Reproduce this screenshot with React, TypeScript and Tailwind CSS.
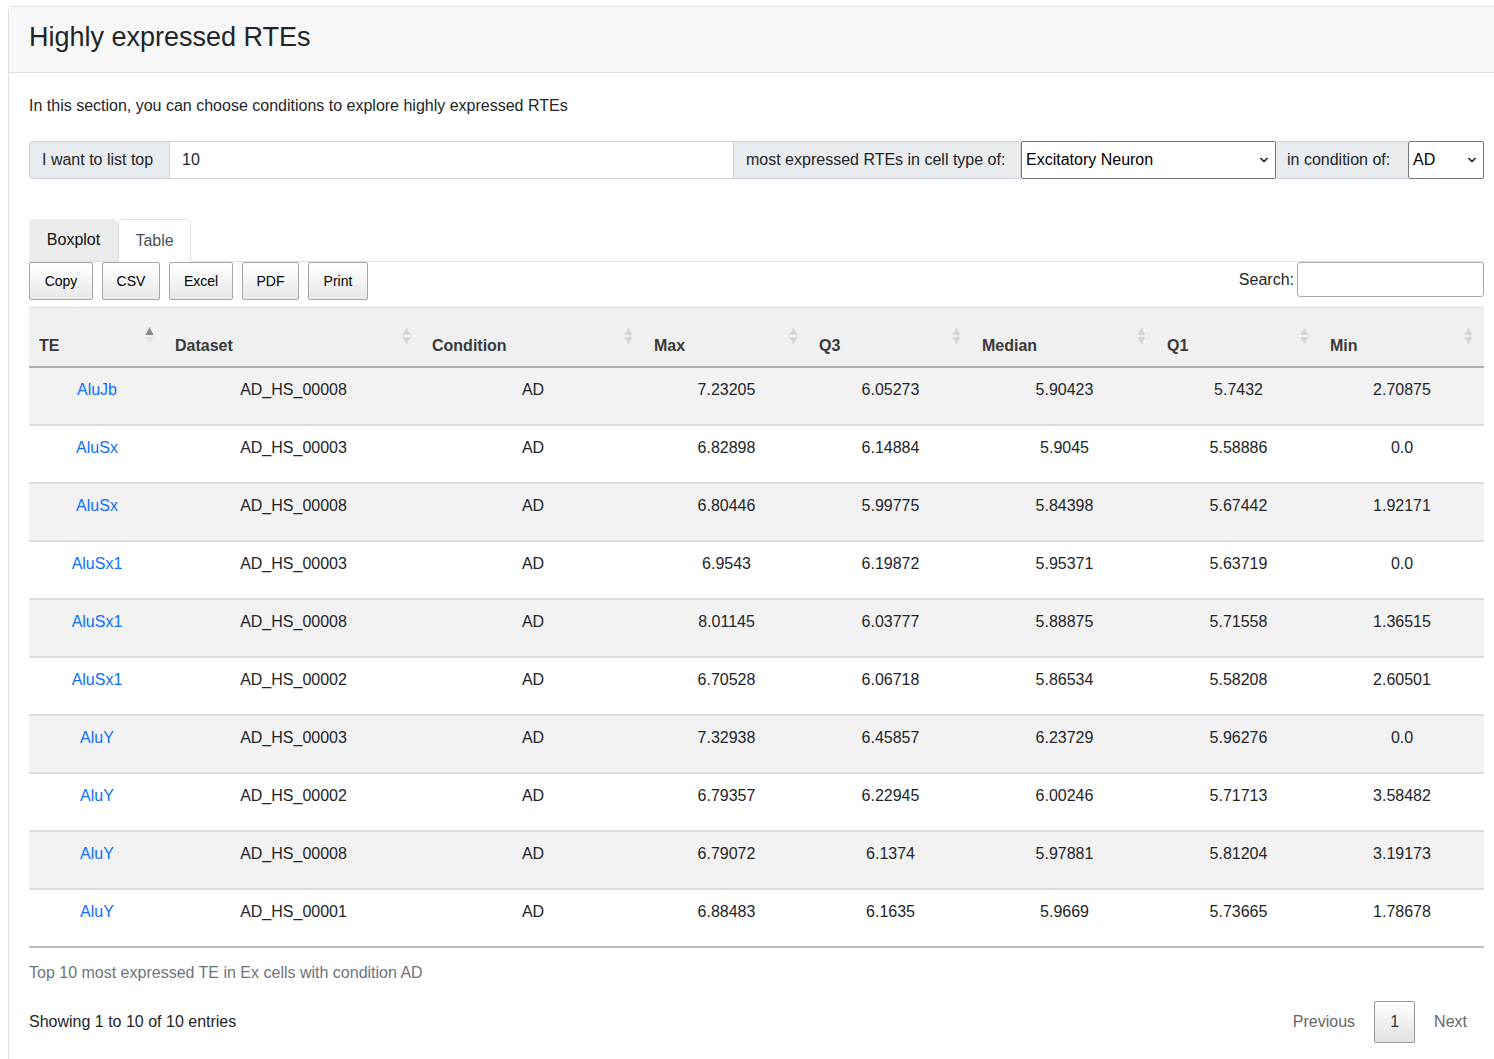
import React from "react";

const rows = [
  ["AluJb", "AD_HS_00008", "AD", "7.23205", "6.05273", "5.90423", "5.7432", "2.70875"],
  ["AluSx", "AD_HS_00003", "AD", "6.82898", "6.14884", "5.9045", "5.58886", "0.0"],
  ["AluSx", "AD_HS_00008", "AD", "6.80446", "5.99775", "5.84398", "5.67442", "1.92171"],
  ["AluSx1", "AD_HS_00003", "AD", "6.9543", "6.19872", "5.95371", "5.63719", "0.0"],
  ["AluSx1", "AD_HS_00008", "AD", "8.01145", "6.03777", "5.88875", "5.71558", "1.36515"],
  ["AluSx1", "AD_HS_00002", "AD", "6.70528", "6.06718", "5.86534", "5.58208", "2.60501"],
  ["AluY", "AD_HS_00003", "AD", "7.32938", "6.45857", "6.23729", "5.96276", "0.0"],
  ["AluY", "AD_HS_00002", "AD", "6.79357", "6.22945", "6.00246", "5.71713", "3.58482"],
  ["AluY", "AD_HS_00008", "AD", "6.79072", "6.1374", "5.97881", "5.81204", "3.19173"],
  ["AluY", "AD_HS_00001", "AD", "6.88483", "6.1635", "5.9669", "5.73665", "1.78678"],
];

const headers = ["TE", "Dataset", "Condition", "Max", "Q3", "Median", "Q1", "Min"];

function SortIcon({ active }: { active?: boolean }) {
  return (
    <svg width="9" height="18" viewBox="0 0 9 18" className="absolute right-[11px] top-[19px]">
      <polygon points="4.5,0 8.5,8 0.5,8" fill={active ? "#8a8a8a" : "#d6d6d6"} />
      <polygon points="0.5,10 8.5,10 4.5,18" fill={active ? "#e2e2e2" : "#d6d6d6"} />
    </svg>
  );
}

function Chevron() {
  return (
    <svg width="10" height="8" viewBox="0 0 10 8">
      <path d="M1.5 2 L5 5.5 L8.5 2" stroke="#222" strokeWidth="1.6" fill="none" />
    </svg>
  );
}

const gridCols = "grid grid-cols-[136px_257px_222px_165px_163px_185px_163px_164px]";

export default function App() {
  return (
    <div
      className="min-h-[1059px] w-full overflow-hidden bg-white pt-[6px] pl-[8px] text-[#212529]"
      style={{ fontFamily: '"Liberation Sans", Arial, sans-serif' }}
    >
      <div className="mr-[-14px] border border-[#dfdfdf] rounded-t-[4px]">
        <div className="h-[66px] bg-[#f7f7f7] border-b border-[#dfdfdf] px-[20px] flex items-center">
          <h3 className="text-[27px] font-medium leading-[34px] text-[#212529] mt-[-5px]">Highly expressed RTEs</h3>
        </div>
        <div className="pt-[21px] pl-[20px] pr-[21px] pb-[20px]">
          <p className="text-[16px] leading-[24px] mb-[23px]">
            In this section, you can choose conditions to explore highly expressed RTEs
          </p>

          {/* input group */}
          <div className="flex h-[38px] w-[1455px] text-[16px]">
            <div className="w-[141px] flex items-center pl-[12px] bg-[#e9ecef] border border-[#ced4da] rounded-l-[4px] text-[#212529]">
              I want to list top
            </div>
            <div className="w-[563px] flex items-center pl-[12px] bg-white border-y border-[#ced4da]">10</div>
            <div className="w-[288px] flex items-center pl-[12px] bg-[#e9ecef] border border-[#ced4da] text-[#212529]">
              most expressed RTEs in cell type of:
            </div>
            <div className="w-[255px] flex items-center justify-between pl-[4px] pr-[6px] bg-white border border-[#767676] rounded-[2px] text-black">
              <span>Excitatory Neuron</span>
              <Chevron />
            </div>
            <div className="w-[132px] flex items-center pl-[11px] bg-[#e9ecef] border-y border-[#ced4da] text-[#212529]">
              in condition of:
            </div>
            <div className="w-[76px] flex items-center justify-between pl-[4px] pr-[6px] bg-white border border-[#767676] rounded-[2px] text-black">
              <span>AD</span>
              <Chevron />
            </div>
          </div>

          {/* tabs */}
          <div className="mt-[40px] flex h-[43px] border-b border-[#dee2e6] w-[1455px]">
            <div className="w-[89px] h-[42px] flex items-center justify-center bg-[#ececec] rounded-t-[5px] text-[16px] text-[#111]">
              Boxplot
            </div>
            <div className="w-[73px] h-[43px] mb-[-1px] flex items-center justify-center bg-white border border-[#dee2e6] border-b-white rounded-t-[5px] text-[16px] text-[#495057]">
              Table
            </div>
          </div>

          {/* buttons & search */}
          <div className="flex justify-between items-start w-[1455px]">
            <div className="flex gap-[9px]">
              {[
                ["Copy", "w-[64px]"],
                ["CSV", "w-[58px]"],
                ["Excel", "w-[64px]"],
                ["PDF", "w-[57px]"],
                ["Print", "w-[60px]"],
              ].map(([t, w]) => (
                <div
                  key={t}
                  className={`${w} h-[38px] flex items-center justify-center text-[14px] text-black border border-[#a6a6a6] rounded-[2px] bg-gradient-to-b from-white to-[#e9e9e9]`}
                >
                  {t}
                </div>
              ))}
            </div>
            <div className="flex items-center gap-[3px] text-[16px]">
              <span>Search:</span>
              <div className="w-[187px] h-[35px] border border-[#aaa] rounded-[3px] bg-white" />
            </div>
          </div>

          {/* table */}
          <div className="mt-[7px] w-[1455px]">
            <div className={`${gridCols} bg-[#f0f0f0] border-t border-[#dedede] border-b-2 border-b-[#a9aeb2]`}>
              {headers.map((h, i) => (
                <div key={h} className="relative h-[58px] pl-[10px] pb-[8px] flex items-end text-[16px] font-bold text-[#393939]">
                  <span className="leading-[24px]">{h}</span>
                  <SortIcon active={i === 0} />
                </div>
              ))}
            </div>
            {rows.map((r, ri) => (
              <div
                key={ri}
                className={`${gridCols} ${ri % 2 === 0 ? "bg-[#f2f2f2]" : "bg-white"} ${
                  ri === rows.length - 1 ? "border-b-2 border-b-[#bdbdbd]" : "border-b-2 border-b-[#dcdcdc]"
                }`}
              >
                {r.map((c, ci) => (
                  <div key={ci} className="h-[56px] pt-[10px] text-center text-[16px] leading-[24px]">
                    {ci === 0 ? <span className="text-[#0d6efd]">{c}</span> : <span className="text-[#212529]">{c}</span>}
                  </div>
                ))}
              </div>
            ))}
          </div>

          <div className="pt-[13px] text-[16px] leading-[24px] text-[#6c757d]">
            Top 10 most expressed TE in Ex cells with condition AD
          </div>

          <div className="mt-[16px] flex justify-between items-center w-[1455px]">
            <span className="text-[16px] leading-[24px]">Showing 1 to 10 of 10 entries</span>
            <div className="flex items-center text-[16px] mr-[17px]">
              <span className="text-[#666] mr-[19px]">Previous</span>
              <div className="w-[41px] h-[42px] flex items-center justify-center border border-[#979797] rounded-[2px] bg-gradient-to-b from-white to-[#e2e2e2] text-[#333]">
                1
              </div>
              <span className="text-[#666] ml-[19px]">Next</span>
            </div>
          </div>
        </div>
      </div>
    </div>
  );
}
